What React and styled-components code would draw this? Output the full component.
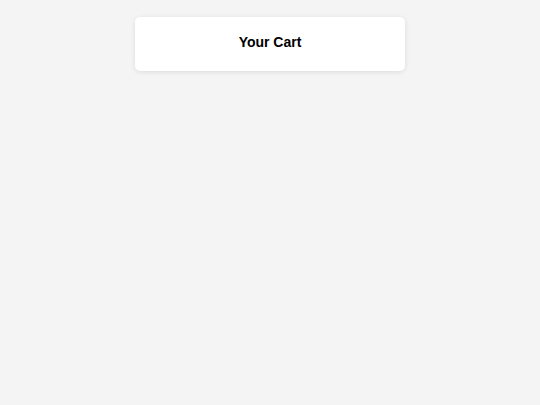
import React from 'react'
import styled, { createGlobalStyle } from 'styled-components'

const GlobalStyle = createGlobalStyle`
  html, body {
    margin: 0;
    padding: 0;
    background-color: #f4f4f4;
    font-family: "Liberation Sans", Arial, sans-serif;
  }
`

const Page = styled.div`
  min-height: 405px;
  display: flex;
  flex-direction: column;
  align-items: center;
  padding-top: 17px;
  box-sizing: border-box;
`

const Card = styled.div`
  width: 270px;
  height: 54px;
  padding-bottom: 5px;
  background-color: #fff;
  border-radius: 5px;
  box-shadow: 0 1px 5px rgba(0, 0, 0, 0.1);
  display: flex;
  align-items: center;
  justify-content: center;
  box-sizing: border-box;
`

const Title = styled.h2`
  margin: 0;
  font-size: 14px;
  font-weight: bold;
  color: #000;
`

export default function App() {
  return (
    <Page>
      <GlobalStyle />
      <Card>
        <Title>Your Cart</Title>
      </Card>
    </Page>
  )
}
